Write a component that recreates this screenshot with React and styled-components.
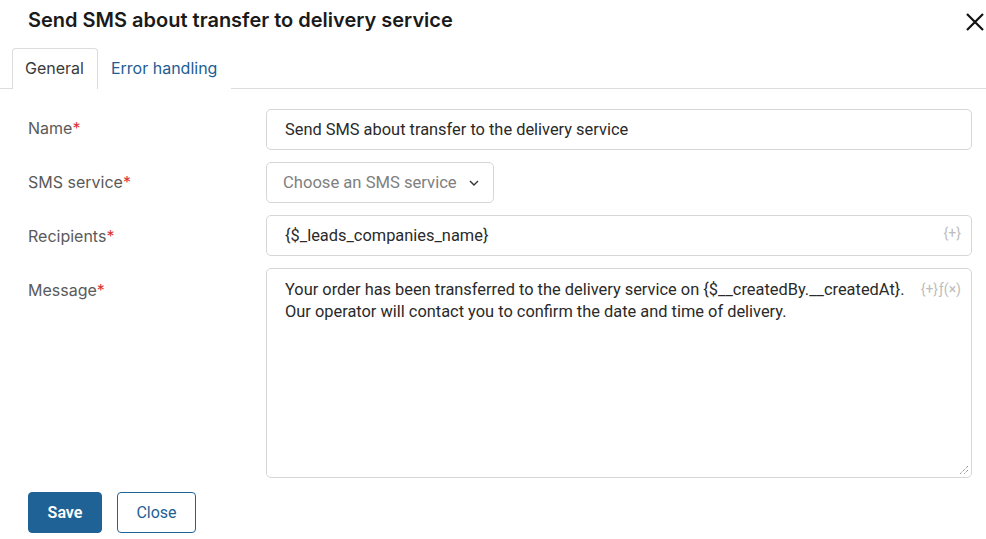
import React from "react";
import styled, { createGlobalStyle } from "styled-components";

const GlobalStyle = createGlobalStyle`
  body {
    margin: 0;
    background: #fff;
    font-family: Roboto, "Liberation Sans", sans-serif;
  }
`;

function App() {
  return (
    <>
      <GlobalStyle />
      <Dialog>
        <Header>
          <Title>Send SMS about transfer to delivery service</Title>
          <CloseIcon aria-label="close">
            <svg width="20" height="20" viewBox="0 0 20 20">
              <path d="M2 2 L18 18 M18 2 L2 18" stroke="#111" strokeWidth="2.2" fill="none" />
            </svg>
          </CloseIcon>
        </Header>

        <Tabs>
          <Tab active>General</Tab>
          <Tab>Error handling</Tab>
        </Tabs>

        <Form>
          <Row>
            <Label>Name<Req>*</Req></Label>
            <Field>Send SMS about transfer to the delivery service</Field>
          </Row>
          <Row>
            <Label offset={1}>SMS service<Req>*</Req></Label>
            <Select>
              Choose an SMS service
              <svg width="10" height="6" viewBox="0 0 10 6">
                <path d="M1 1 L5 5 L9 1" stroke="#333" strokeWidth="1.4" fill="none" />
              </svg>
            </Select>
          </Row>
          <Row>
            <Label offset={2}>Recipients<Req>*</Req></Label>
            <Field>
              {"{$_leads_companies_name}"}
              <Hint>{"{+}"}</Hint>
            </Field>
          </Row>
          <Row>
            <Label offset={3}>Message<Req>*</Req></Label>
            <TextArea>
              <div>
                Your order has been transferred to the delivery service on {"{$__createdBy.__createdAt}"}.
                <br />
                Our operator will contact you to confirm the date and time of delivery.
              </div>
              <Hint>{"{+}"}<Fx>ƒ(×)</Fx></Hint>
              <Grip width="10" height="10" viewBox="0 0 10 10">
                <path d="M9 1 L1 9 M9 5 L5 9" stroke="#666" strokeWidth="1" strokeDasharray="1 1" />
              </Grip>
            </TextArea>
          </Row>
        </Form>

        <Footer>
          <SaveButton>Save</SaveButton>
          <CloseButton>Close</CloseButton>
        </Footer>
      </Dialog>
    </>
  );
}

const Dialog = styled.div`
  width: 986px;
  height: 539px;
  box-sizing: border-box;
  display: flex;
  flex-direction: column;
  color: #333;
`;

const Header = styled.div`
  display: flex;
  align-items: center;
  justify-content: space-between;
  padding: 4px 0 0 28px;
  height: 36px;
`;

const Title = styled.h1`
  margin: 0 0 4px;
  font-family: Inter, Roboto, sans-serif;
  font-size: 20px;
  font-weight: 600;
  color: #1a1a1a;
`;

const CloseIcon = styled.div`
  display: flex;
  margin-right: 1px;
`;

const Tabs = styled.div`
  display: flex;
  margin-top: 8px;
  padding-left: 12px;
  border-bottom: 1px solid #dcdcdc;
  height: 40px;
`;

const Tab = styled.div`
  display: flex;
  align-items: center;
  padding: 0 13px 0 12px;
  font-family: Inter, Roboto, sans-serif;
  font-size: 16px;
  color: ${p => (p.active ? "#3a3a3a" : "#1e5d92")};
  background: #fff;
  border: 1px solid ${p => (p.active ? "#dcdcdc" : "transparent")};
  border-bottom: none;
  border-radius: 4px 4px 0 0;
  margin-bottom: -1px;
  padding-bottom: 3px;
`;

const Form = styled.div`
  display: flex;
  flex-direction: column;
  gap: 12px;
  padding: 20px 14px 0 28px;
`;

const Row = styled.div`
  display: grid;
  grid-template-columns: 238px 1fr;
  align-items: start;
`;

const Label = styled.div`
  font-family: Inter, Roboto, sans-serif;
  font-size: 16px;
  color: #5a5a5a;
  padding-top: ${p => 9 + (p.offset || 0)}px;
`;

const Req = styled.span`
  color: #d33;
`;

const Box = styled.div`
  position: relative;
  box-sizing: border-box;
  border: 1px solid #d6d6d6;
  border-radius: 5px;
  font-size: 16.4px;
  color: #2a2a2a;
  background: #fff;
`;

const Field = styled(Box)`
  height: 41px;
  display: flex;
  align-items: center;
  padding: 0 18px;
`;

const Select = styled(Box)`
  height: 41px;
  width: 228px;
  display: flex;
  align-items: center;
  justify-content: space-between;
  padding: 0 14px 0 16px;
  font-size: 16.6px;
  color: #808080;
`;

const TextArea = styled(Box)`
  height: 210px;
  padding: 10px 60px 0 18px;
  line-height: 22px;
`;

const Hint = styled.span`
  position: absolute;
  right: 10px;
  top: 9px;
  font-size: 14px;
  color: #bdbdbd;
  display: flex;
  align-items: center;
`;

const Fx = styled.span`
  margin-left: 1px;
`;

const Grip = styled.svg`
  position: absolute;
  right: 2px;
  bottom: 2px;
`;

const Footer = styled.div`
  display: flex;
  gap: 16px;
  padding: 14px 0 0 28px;
`;

const Button = styled.button`
  height: 41px;
  box-sizing: border-box;
  border-radius: 4px;
  font-family: Roboto, sans-serif;
  font-size: 16px;
  cursor: pointer;
`;

const SaveButton = styled(Button)`
  width: 74px;
  background: #1f6396;
  border: 1px solid #1f6396;
  color: #fff;
  font-weight: 600;
`;

const CloseButton = styled(Button)`
  width: 79px;
  margin-left: -1px;
  background: #fff;
  border: 1px solid #1f6396;
  color: #1f5f94;
`;

export default App;
